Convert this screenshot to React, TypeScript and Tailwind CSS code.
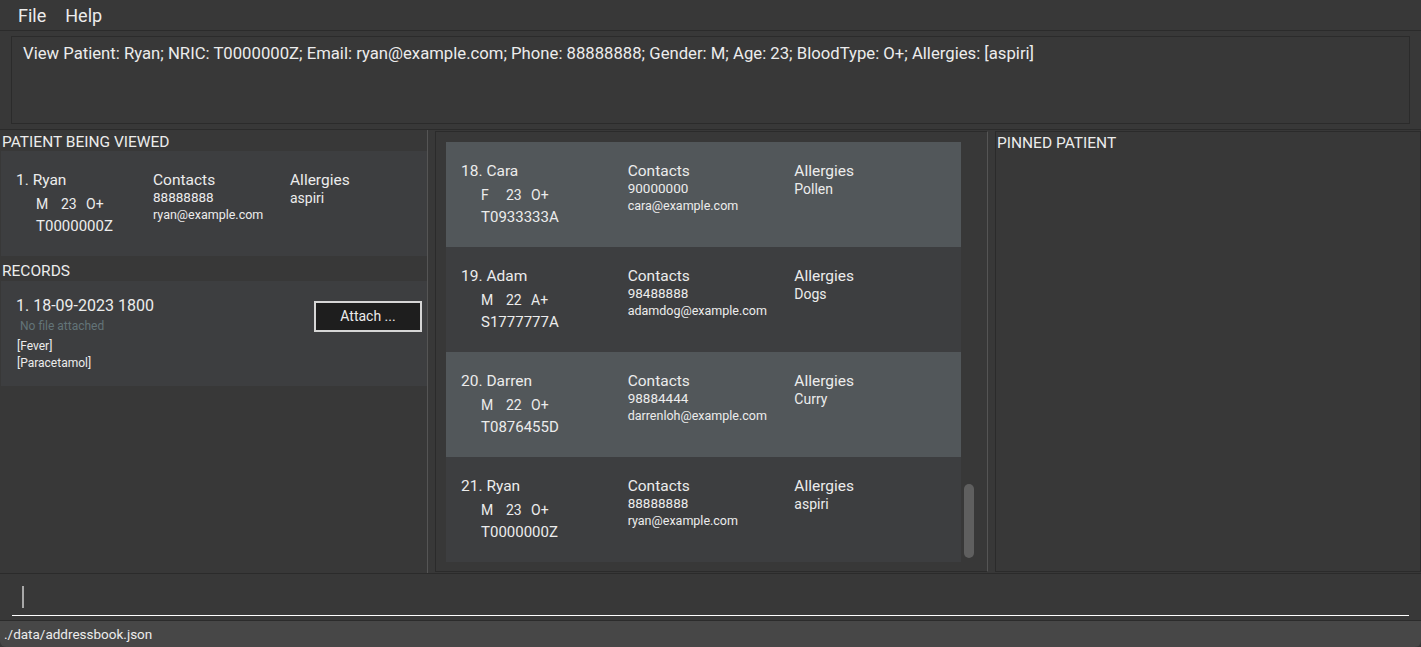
import React from "react";

interface Patient {
  index: number;
  name: string;
  gender: string;
  age: number;
  blood: string;
  nric: string;
  phone: string;
  email: string;
  allergies: string;
}

const patients: Patient[] = [
  { index: 18, name: "Cara", gender: "F", age: 23, blood: "O+", nric: "T0933333A", phone: "90000000", email: "cara@example.com", allergies: "Pollen" },
  { index: 19, name: "Adam", gender: "M", age: 22, blood: "A+", nric: "S1777777A", phone: "98488888", email: "adamdog@example.com", allergies: "Dogs" },
  { index: 20, name: "Darren", gender: "M", age: 22, blood: "O+", nric: "T0876455D", phone: "98884444", email: "darrenloh@example.com", allergies: "Curry" },
  { index: 21, name: "Ryan", gender: "M", age: 23, blood: "O+", nric: "T0000000Z", phone: "88888888", email: "ryan@example.com", allergies: "aspiri" },
];

const viewed: Patient = { ...patients[3], index: 1 };

const PatientCard = ({ p, light }: { p: Patient; light: boolean }) => (
  <div className={`grid grid-cols-3 h-[105px] pl-[15px] pt-[19px] ${light ? "bg-[#52575a]" : "bg-[#3d3e40]"}`}>
    <div>
      <div className="text-[15.5px] leading-[20px]">
        {p.index}. {p.name}
      </div>
      <div className="flex pl-[20px] pt-[4px] text-[14px] leading-[20px]">
        <span className="w-[25px]">{p.gender}</span>
        <span className="w-[25px]">{p.age}</span>
        <span className="w-[25px]">{p.blood}</span>
      </div>
      <div className="pl-[20px] pt-[2px] text-[15px] leading-[20px]">{p.nric}</div>
    </div>
    <div>
      <div className="text-[15.5px] leading-[20px]">Contacts</div>
      <div className="text-[13.5px] leading-[15px]">{p.phone}</div>
      <div className="text-[12.5px] leading-[19px]">{p.email}</div>
    </div>
    <div>
      <div className="text-[15.5px] leading-[20px]">Allergies</div>
      <div className="text-[14px] leading-[16px]">{p.allergies}</div>
    </div>
  </div>
);

const App = () => {
  return (
    <div
      className="w-[1421px] h-[647px] bg-[#383838] text-[#ececec] flex flex-col overflow-hidden"
      style={{ fontFamily: "Roboto, 'Noto Sans', sans-serif" }}
    >
      {/* menu bar */}
      <div className="h-[31px] border-b border-[#2b2b2b] flex items-center text-[18px] pl-[18px] gap-[19px] shrink-0">
        <span>File</span>
        <span>Help</span>
      </div>

      {/* result display */}
      <div className="h-[99px] border-b border-[#2b2b2b] px-[11px] pt-[5px] pb-[5px] shrink-0">
        <div className="h-full border border-[#2b2b2b] pl-[11px] pt-[7px] text-[16.7px] leading-[20px]">
          View Patient: Ryan; NRIC: T0000000Z; Email: ryan@example.com; Phone: 88888888; Gender: M; Age: 23; BloodType: O+; Allergies: [aspiri]
        </div>
      </div>

      {/* main panels */}
      <div className="h-[444px] border-b border-[#2b2b2b] flex shrink-0">
        <div className="w-[428px] border-r border-[#555555] flex flex-col pl-[1px]">
          <div className="h-[21px] pt-[2px] pl-[1px] text-[15.5px] leading-[20px]">PATIENT BEING VIEWED</div>
          <div className="h-[104px]">
            <PatientCard p={viewed} light={false} />
          </div>
          <div className="h-[26px] pt-[6px] pl-[1px] text-[15.5px] leading-[20px]">RECORDS</div>
          <div className="h-[105px] bg-[#3d3e40] flex justify-between pl-[15px] pt-[15px] pr-[5px]">
            <div>
              <div className="text-[16px] leading-[20px]">1. 18-09-2023 1800</div>
              <div className="pl-[4px] pt-[2px] text-[12px] leading-[16px] text-[#637478]">No file attached</div>
              <div className="pt-[4px] pl-[1px] text-[12px] leading-[17px]">[Fever]</div>
              <div className="pl-[1px] text-[12px] leading-[17px]">[Paracetamol]</div>
            </div>
            <div className="pt-[5px]">
              <button className="w-[108px] h-[31px] bg-[#1e1e1e] border-2 border-[#d6d6d6] text-[14px] text-[#ececec]">
                Attach ...
              </button>
            </div>
          </div>
        </div>

        <div className="w-[7px]" />

        <div className="w-[553px] mt-[1px] mb-[1px] border-l border-t border-b border-[#2b2b2b] border-r border-r-[#555555] flex pl-[10px] pt-[10px]">
          <div className="w-[515px] flex flex-col">
            {patients.map((p, i) => (
              <PatientCard key={p.index} p={p} light={i % 2 === 0} />
            ))}
          </div>
          <div className="w-[16px] relative">
            <div className="absolute left-[3px] top-[342px] w-[10px] h-[74px] rounded-[5px] bg-[#5f5f5f]" />
          </div>
        </div>

        <div className="w-[7px]" />

        <div className="flex-1 mt-[1px] mb-[1px] border border-[#2b2b2b] pl-[1px] pt-[1px] text-[15.5px] leading-[20px]">
          PINNED PATIENT
        </div>
      </div>

      {/* command box */}
      <div className="h-[47px] border-b border-[#2b2b2b] px-[12px] pt-[12px] shrink-0">
        <div className="h-[30px] border-b border-white pl-[10px]">
          <div className="w-[2px] h-[22px] bg-[#a8a8a8]" />
        </div>
      </div>

      {/* status bar */}
      <div className="flex-1 bg-[#474747] pl-[4px] flex items-center text-[13.5px] rounded-b-[6px]">
        ./data/addressbook.json
      </div>
    </div>
  );
};

export default App;
